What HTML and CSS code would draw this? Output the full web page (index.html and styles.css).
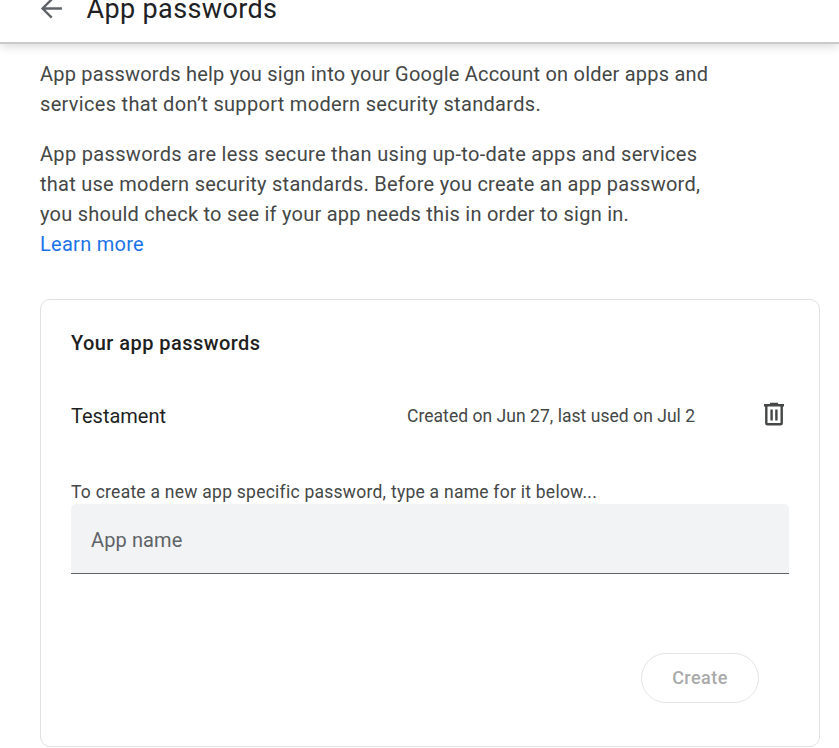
FILE: index.html
```
<!DOCTYPE html>
<html lang="en">
<head>
<meta charset="utf-8">
<title>App passwords</title>
<link rel="stylesheet" href="styles.css">
</head>
<body>
<header class="topbar">
  <svg class="back" viewBox="0 0 24 24" aria-hidden="true"><path d="M22 12H3.8M12.2 3.2 3.4 12l8.8 8.8" fill="none" stroke="#5f6368" stroke-width="2.3"/></svg>
  <h1 class="title">App passwords</h1>
</header>
<main class="content">
  <p class="intro"><span class="l1">App passwords help you sign into your Google Account on older apps and</span><br><span class="l2">services that don’t support modern security standards.</span></p>
  <p class="intro"><span class="l3">App passwords are less secure than using up-to-date apps and services</span><br><span class="l4">that use modern security standards. Before you create an app password,</span><br><span class="l5">you should check to see if your app needs this in order to sign in.</span><br><a class="learn">Learn more</a></p>
  <section class="card">
    <h2 class="card-title">Your app passwords</h2>
    <div class="row">
      <div class="name">Testament</div>
      <div class="dates">Created on Jun 27, last used on Jul 2</div>
      <svg class="trash" viewBox="0 0 24 26" aria-hidden="true"><path d="M2 4.3h20M8 3h8M4.3 5v17q0 1.3 1.3 1.3h12.8q1.3 0 1.3-1.3V5M9.6 8.5v11M14.4 8.5v11" fill="none" stroke="#444746" stroke-width="2.4"/></svg>
    </div>
    <label class="hint">To create a new app specific password, type a name for it below...</label>
    <div class="field">App name</div>
    <div class="actions"><button class="create" disabled>Create</button></div>
  </section>
</main>
</body>
</html>
```
FILE: styles.css
```
* { box-sizing: border-box; }
body { margin: 0; background: #fff; color: #444746; font-family: Roboto, sans-serif; overflow: hidden; }
.topbar { height: 44px; display: flex; align-items: flex-start; padding-left: 39px; border-bottom: 2px solid #c9cac9; box-shadow: 0 2px 10px rgba(0,0,0,.16); }
.back { width: 25px; height: 25px; margin-top: -4px; flex: none; }
.title { margin: -8px 0 0 22.5px; font-size: 27px; line-height: 34px; font-weight: 400; color: #202124; letter-spacing: .36px; }
.content { padding: 15px 19px 0 40px; }
.intro { margin: 0 0 20px; font-size: 20px; line-height: 30px; white-space: nowrap; }
.l1 { letter-spacing: .22px; }
.l2 { letter-spacing: .31px; }
.l3 { letter-spacing: .32px; }
.l4 { letter-spacing: .26px; }
.l5 { letter-spacing: .25px; }
.learn { color: #1a73e8; letter-spacing: .28px; }
.card { margin-top: 40px; height: 448px; border: 1px solid #e0e2e0; border-radius: 10px; padding: 28px 30px 0; }
.card-title { margin: 0; font-size: 20px; line-height: 30px; font-weight: 500; color: #1f1f1f; letter-spacing: .44px; }
.row { display: flex; align-items: center; height: 60px; margin-top: 28px; }
.name { width: 336px; font-size: 20px; color: #1f1f1f; }
.dates { font-size: 17.5px; width: 355px; letter-spacing: .04px; }
.trash { width: 24px; height: 26px; flex: none; margin-top: -4px; }
.hint { display: block; margin-top: 34px; font-size: 17.5px; line-height: 24px; letter-spacing: .25px; }
.field { height: 70px; padding-left: 20px; background: #f1f3f4; border-bottom: 1px solid #5f6368; border-radius: 5px 5px 0 0; font-size: 20px; line-height: 72px; color: #5f6368; letter-spacing: .12px; }
.actions { display: flex; justify-content: flex-end; padding: 79px 30px 0 0; }
.create { width: 118px; height: 50px; padding: 0 0 2px; border: 1px solid #e3e3e3; border-radius: 25px; background: #fff; font: 500 18px Roboto, sans-serif; color: #a9aaa9; letter-spacing: .45px; }
```
